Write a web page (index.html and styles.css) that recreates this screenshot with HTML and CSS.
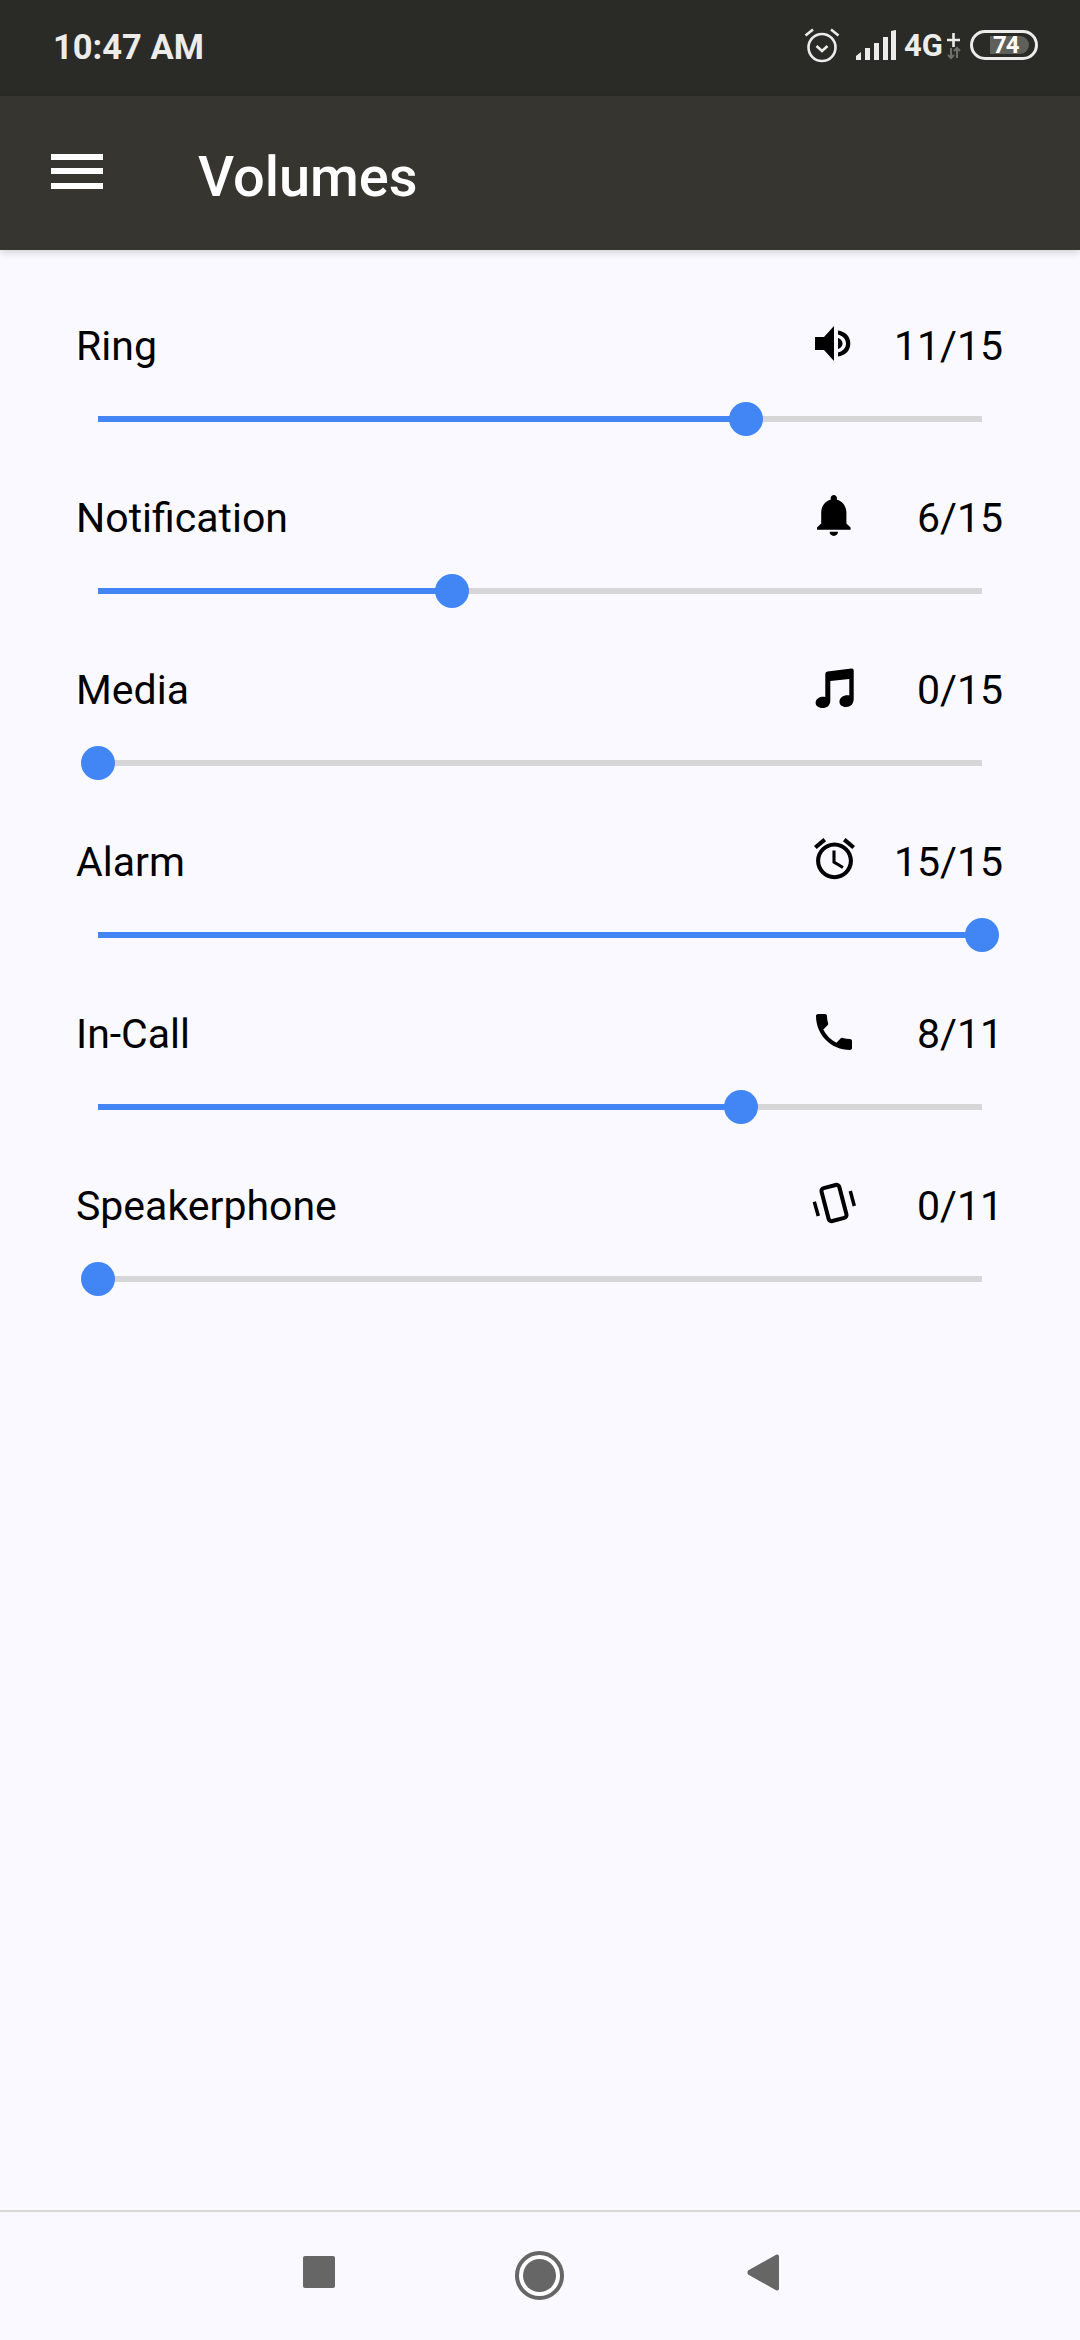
FILE: index.html
```html
<!DOCTYPE html>
<html lang="en">
    <head>
        <meta charset="UTF-8" />
        <title>Volumes</title>
        <link rel="stylesheet" href="styles.css">
    </head>
    <body>
        <main class="page">
            <div class="status-bar">
                <span class="time">10:47 AM</span>
                <div class="status-icons">
                    <svg class="status-alarm" width="36" height="36" viewBox="0 0 36 36">
                        <circle cx="18" cy="20.500" r="13.500" fill="none" stroke="#ececea" stroke-width="2.600" />
                        <path d="M12.500 19l5.500 5 5.500-5" fill="none" stroke="#ececea" stroke-width="2.600" />
                        <path d="M1.500 8.500L9 2.500M34.500 8.500L27 2.500" fill="none" stroke="#ececea" stroke-width="2.600" />
                    </svg>
                    <svg class="status-signal" width="40" height="30" viewBox="0 0 40 30">
                        <path d="M0 30V26L5 22V30ZM9 30V18H14V30ZM18 30V13H23V30ZM27 30V7H32V30ZM35 30V1L40 0V30Z" fill="#ececea" />
                    </svg>
                    <span class="network">4G</span>
                    <svg class="status-plus" width="14" height="32" viewBox="0 0 14 32">
                        <path d="M0 11H13M6.500 4V18" stroke="#ececea" stroke-width="2.600" fill="none" />
                        <path d="M4 19V29M1 26L4 29L7 26M10 29V19M7 22L10 19L13 22" stroke="#6f706b" stroke-width="2" fill="none" />
                    </svg>
                    <div class="battery">
                        <span class="battery-level">74</span>
                    </div>
                </div>
            </div>

            <header class="app-bar">
                <div class="menu">
                    <span></span>
                    <span></span>
                    <span></span>
                </div>
                <h1>Volumes</h1>
            </header>

            <section class="volumes">
                <div class="volume">
                    <div class="volume-head">
                        <span class="volume-name">Ring</span>
                        <svg class="volume-icon" viewBox="0 0 48 48">
                            <path d="M4 15H13L23 4V39L13 28H4Z" />
                            <path d="M27 8.500C34 9.500 39.300 14 39.300 21.500S34 33.500 27 34.500V30.500C31 29.500 35 26.500 35 21.500S31 13.500 27 12.500Z" />
                            <path d="M27 16C29.500 17 31.500 18.500 31.500 21.500S29.500 26 27 27Z" />
                        </svg>
                        <div class="volume-value"><span class="current">11</span>/15</div>
                    </div>
                    <div class="slider">
                        <div class="slider-fill" style="width: 73.33%"></div>
                        <div class="slider-thumb" style="left: 73.33%"></div>
                    </div>
                </div>

                <div class="volume">
                    <div class="volume-head">
                        <span class="volume-name">Notification</span>
                        <svg class="volume-icon" viewBox="1.140 2 22.860 22.860">
                            <path d="M12 22c1.100 0 2-.9 2-2h-4c0 1.100.9 2 2 2zm6-6v-5c0-3.070-1.630-5.640-4.500-6.320V4c0-.83-.67-1.500-1.500-1.500s-1.500.67-1.500 1.500v.68C7.640 5.360 6 7.920 6 11v5l-2 2v1h16v-1l-2-2z" />
                        </svg>
                        <div class="volume-value"><span class="current">6</span>/15</div>
                    </div>
                    <div class="slider">
                        <div class="slider-fill" style="width: 40%"></div>
                        <div class="slider-thumb" style="left: 40%"></div>
                    </div>
                </div>

                <div class="volume">
                    <div class="volume-head">
                        <span class="volume-name">Media</span>
                        <svg class="volume-icon" viewBox="0 0 48 48">
                            <path d="M14.300 8Q14.300 5.700 16.500 5.500L40.500 2.500Q42.700 2.300 42.700 4.500V33C42.700 38 39.500 41 35 41C31 41 28 38.700 28.500 35C29 31 33.500 28.500 38.300 29.500V13L19.300 15V34.500C19.300 39.500 16 42 11.500 42C7.500 42 4 39.500 4.700 36C5.300 32 10 30 14.300 31Z" />
                        </svg>
                        <div class="volume-value"><span class="current">0</span>/15</div>
                    </div>
                    <div class="slider">
                        <div class="slider-fill" style="width: 0%"></div>
                        <div class="slider-thumb" style="left: 0%"></div>
                    </div>
                </div>

                <div class="volume">
                    <div class="volume-head">
                        <span class="volume-name">Alarm</span>
                        <svg class="volume-icon" viewBox="0.540 1.860 23.400 23.400">
                            <path d="M22 5.720l-4.600-3.860-1.290 1.530 4.600 3.860L22 5.720zM7.880 3.390L6.600 1.860 2 5.710l1.290 1.530 4.590-3.850zM12.500 8H11v6l4.750 2.850.75-1.230-4-2.370V8zM12 4c-4.970 0-9 4.030-9 9s4.030 9 9 9 9-4.030 9-9-4.030-9-9-9zm0 16c-3.870 0-7-3.130-7-7s3.130-7 7-7 7 3.130 7 7-3.130 7-7 7z" />
                        </svg>
                        <div class="volume-value"><span class="current">15</span>/15</div>
                    </div>
                    <div class="slider">
                        <div class="slider-fill" style="width: 100%"></div>
                        <div class="slider-thumb" style="left: 100%"></div>
                    </div>
                </div>

                <div class="volume">
                    <div class="volume-head">
                        <span class="volume-name">In-Call</span>
                        <svg class="volume-icon" viewBox="0.500 1 24 24">
                            <path d="M6.620 10.790c1.440 2.830 3.760 5.140 6.590 6.590l2.200-2.200c.27-.27.67-.36 1.020-.24 1.120.37 2.330.57 3.570.57.55 0 1 .45 1 1V20c0 .55-.45 1-1 1-9.390 0-17-7.610-17-17 0-.55.45-1 1-1h3.500c.55 0 1 .45 1 1 0 1.250.2 2.450.57 3.570.11.35.03.74-.25 1.020l-2.200 2.200z" />
                        </svg>
                        <div class="volume-value"><span class="current">8</span>/11</div>
                    </div>
                    <div class="slider">
                        <div class="slider-fill" style="width: 72.73%"></div>
                        <div class="slider-thumb" style="left: 72.73%"></div>
                    </div>
                </div>

                <div class="volume">
                    <div class="volume-head">
                        <span class="volume-name">Speakerphone</span>
                        <svg class="volume-icon" viewBox="0 0 48 48">
                            <rect x="13.800" y="4" width="18.400" height="34" rx="3" transform="rotate(-14.700 23 21)" fill="none" stroke="#000" stroke-width="4" />
                            <path d="M3.300 19.700L7.300 34M39.300 9L43.300 24" fill="none" stroke="#000" stroke-width="3.500" />
                        </svg>
                        <div class="volume-value"><span class="current">0</span>/11</div>
                    </div>
                    <div class="slider">
                        <div class="slider-fill" style="width: 0%"></div>
                        <div class="slider-thumb" style="left: 0%"></div>
                    </div>
                </div>
            </section>

            <nav class="nav-bar">
                <svg width="32" height="32" viewBox="0 0 32 32">
                    <rect width="32" height="32" rx="2" fill="#666" />
                </svg>
                <svg class="nav-home" width="49" height="49" viewBox="0 0 49 49">
                    <circle cx="24.500" cy="24.500" r="22.500" fill="#fff" stroke="#666" stroke-width="4" />
                    <circle cx="24.500" cy="24.500" r="16.500" fill="#666" />
                </svg>
                <svg class="nav-back" width="32" height="37" viewBox="0 0 32 37">
                    <path d="M29.500 0.500Q32 0 32 2.500V34.500Q32 37 29.500 36.500L1 20.500Q0 18.500 1 16.500Z" fill="#666" />
                </svg>
            </nav>
        </main>
    </body>
</html>
```

FILE: styles.css
```css
* {
    padding: 0;
    margin: 0;
    box-sizing: border-box;
}

body {
    width: 1080px;
    height: 2340px;
    overflow: hidden;
    background-color: #f9f9ff;
    font-family: Roboto, sans-serif;
    color: #000;
}

.page {
    display: flex;
    flex-direction: column;
    height: 100%;
}

.status-bar {
    display: flex;
    align-items: center;
    justify-content: space-between;
    height: 96px;
    padding: 0 42px 2px 53px;
    background-color: #2a2a26;
    color: #ececea;
}

.time {
    font-size: 34.500px;
    font-weight: 700;
}

.status-icons {
    display: flex;
    align-items: center;
    margin-bottom: 4px;
}

.status-signal {
    margin-left: 16px;
}

.network {
    margin-left: 8px;
    font-size: 31px;
    font-weight: 700;
}

.status-plus {
    margin-left: 4px;
}

.battery {
    display: flex;
    align-items: center;
    width: 68px;
    height: 30px;
    margin-left: 9px;
    padding: 3px 6px 3px 17px;
    border: 3px solid #ececea;
    border-radius: 15px;
}

.battery-level {
    flex: 1;
    height: 100%;
    padding-left: 3px;
    background-color: #5f605a;
    border-radius: 0 9px 9px 0;
    font-size: 24px;
    font-weight: 700;
    letter-spacing: -1px;
    line-height: 18px;
    color: #fff;
}

.app-bar {
    display: flex;
    align-items: center;
    height: 154px;
    padding: 8px 0 0 51px;
    background-color: #363530;
    color: #fff;
    box-shadow: 0 2px 8px rgba(0, 0, 0, 0.18);
    position: relative;
}

.menu {
    display: flex;
    flex-direction: column;
    gap: 8.500px;
    width: 52px;
    margin-right: 95px;
    margin-bottom: 12px;
}

.menu span {
    height: 6px;
    background-color: #fff;
}

.app-bar h1 {
    font-size: 56px;
    font-weight: 500;
}

.volumes {
    flex: 1;
    display: flex;
    flex-direction: column;
    gap: 56px;
    padding-top: 71px;
}

.volume-head {
    display: flex;
    align-items: center;
    height: 50px;
    padding: 0 76px;
}

.volume-name {
    flex: 1;
    font-size: 41px;
}

.volume-icon {
    width: 48px;
    height: 48px;
    fill: #000;
}

.volume-value {
    display: flex;
    width: 110px;
    margin-left: 35px;
    font-size: 41px;
}

.current {
    width: 46px;
    text-align: right;
}

.slider {
    position: relative;
    height: 6px;
    margin: 45px 98px 15px;
    background-color: #d6d6d8;
}

.slider-fill {
    height: 100%;
    background-color: #4285f4;
}

.slider-thumb {
    position: absolute;
    top: -14px;
    width: 34px;
    height: 34px;
    margin-left: -17px;
    border-radius: 50%;
    background-color: #4285f4;
}

.nav-bar {
    display: flex;
    align-items: flex-start;
    height: 130px;
    padding: 44px 0 0 303px;
    border-top: 2px solid #d8d8d8;
}

.nav-home {
    margin: -5px 0 0 180px;
}

.nav-back {
    margin: -2px 0 0 183px;
}
```
